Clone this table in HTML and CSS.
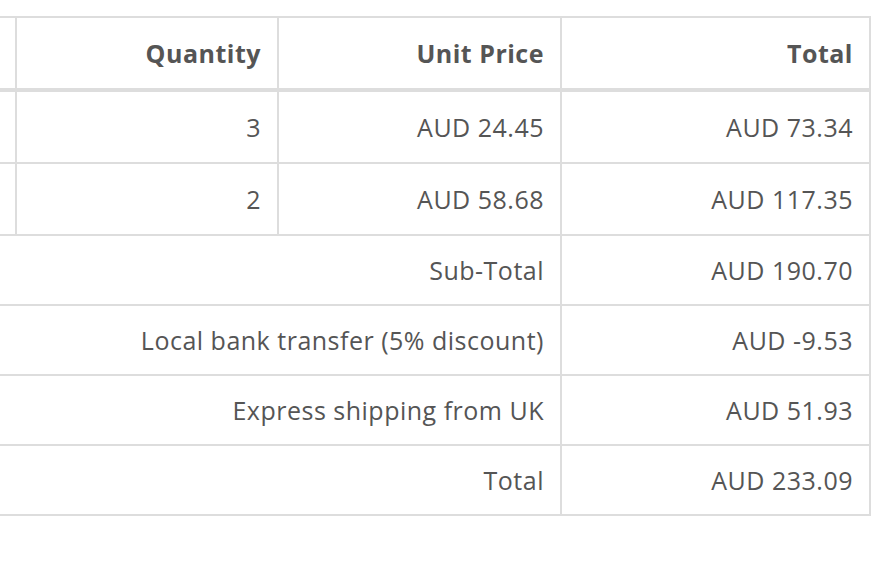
FILE: index.html
```html
<!DOCTYPE html>
<html lang="en">
<head>
<meta charset="utf-8">
<title>Order summary</title>
<link rel="stylesheet" href="styles.css">
</head>
<body>
<table class="cart">
  <colgroup>
    <col class="col-stub">
    <col class="col-qty">
    <col class="col-unit">
    <col class="col-total">
  </colgroup>
  <thead>
    <tr>
      <th class="stub"></th>
      <th>Quantity</th>
      <th>Unit Price</th>
      <th>Total</th>
    </tr>
  </thead>
  <tbody>
    <tr class="item">
      <td class="stub"></td>
      <td>3</td>
      <td>AUD 24.45</td>
      <td>AUD 73.34</td>
    </tr>
    <tr class="item">
      <td class="stub"></td>
      <td>2</td>
      <td>AUD 58.68</td>
      <td>AUD 117.35</td>
    </tr>
    <tr class="sum">
      <td colspan="3">Sub-Total</td>
      <td>AUD 190.70</td>
    </tr>
    <tr class="sum">
      <td colspan="3">Local bank transfer (5% discount)</td>
      <td>AUD -9.53</td>
    </tr>
    <tr class="sum">
      <td colspan="3">Express shipping from UK</td>
      <td>AUD 51.93</td>
    </tr>
    <tr class="sum">
      <td colspan="3">Total</td>
      <td>AUD 233.09</td>
    </tr>
  </tbody>
</table>
</body>
</html>
```

FILE: styles.css
```css
html, body {
  background: #ffffff;
}

body {
  margin: 16px 8px 0 0;
  font-family: "Open Sans", "DejaVu Sans", sans-serif;
  color: #555555;
}

.cart {
  border-collapse: collapse;
  table-layout: fixed;
  width: 871px;
  font-size: 25px;
  line-height: 34px;
  letter-spacing: 0.5px;
}

.col-stub { width: 16px; }
.col-qty { width: 262px; }
.col-unit { width: 283px; }
.col-total { width: 309px; }

.cart th,
.cart td {
  border: 2px solid #dddddd;
  padding: 18px 16px;
  text-align: right;
  white-space: nowrap;
}

.cart th {
  font-weight: 700;
}

.cart thead th {
  border-bottom-width: 4px;
}

.cart tr > :first-child {
  border-left: none;
}

.cart .stub {
  padding: 0;
}

.cart .sum td {
  padding-top: 17px;
  padding-bottom: 17px;
}
```
